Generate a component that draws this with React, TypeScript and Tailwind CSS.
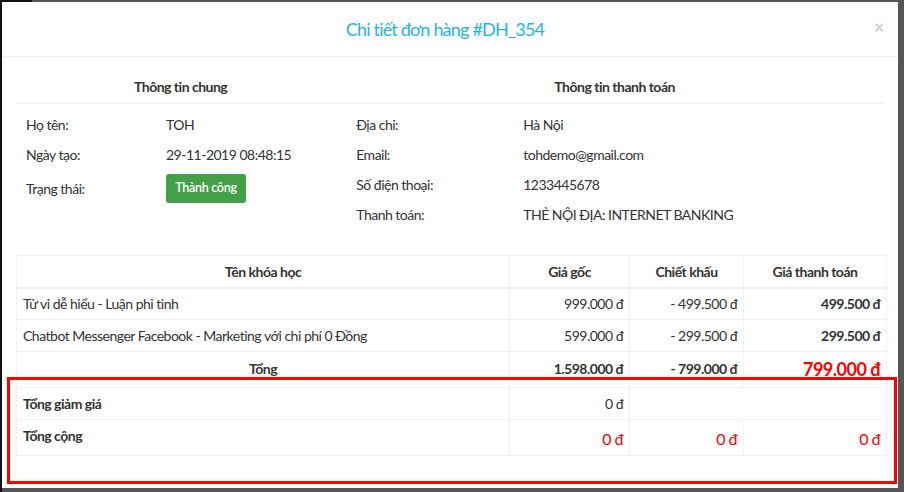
import React from "react";

const cell = "border border-[#f2f2f2] px-[6px]";

const rows = [
  { name: "Tử vi dễ hiểu - Luận phi tinh", price: "999.000 đ", off: "- 499.500 đ", pay: "499.500 đ" },
  {
    name: "Chatbot Messenger Facebook - Marketing với chi phí 0 Đồng",
    price: "599.000 đ",
    off: "- 299.500 đ",
    pay: "299.500 đ",
  },
];

function InfoRow({ label, value, labelWidth }: { label: string; value: React.ReactNode; labelWidth: string }) {
  return (
    <div className="flex h-[30px] items-center">
      <div className={labelWidth}>{label}</div>
      <div>{value}</div>
    </div>
  );
}

export default function App() {
  return (
    <div className="relative h-[492px] w-[904px] overflow-hidden border-l-2 border-[#111] bg-[#555] pt-[2px] font-['Lato',sans-serif] text-[14px] tracking-[-0.5px] text-[#333]">
      <div className="absolute left-0 top-0 h-[2px] w-[30px] bg-[#111]" />

      <div className="h-[486px] w-[896px] bg-white">
        {/* header */}
        <div className="relative flex h-[55px] items-center justify-center border-b border-[#eee]">
          <h4 className="pr-[10px] text-[18px] tracking-[-0.8px] text-[#1fb3e8]">Chi tiết đơn hàng #DH_354</h4>
          <span className="absolute right-[14px] top-[12px] text-[18px] font-bold text-[#cfcfcf]">×</span>
        </div>

        <div className="px-[14px] pt-[14px]">
          {/* info */}
          <div className="flex">
            <div className="w-[330px]">
              <div className="flex h-[33px] items-center justify-center border-b-2 border-[#f4f4f4] font-bold">
                Thông tin chung
              </div>
              <div className="pl-[10px] pt-[5px]">
                <InfoRow label="Họ tên:" value="TOH" labelWidth="w-[140px]" />
                <InfoRow label="Ngày tạo:" value="29-11-2019 08:48:15" labelWidth="w-[140px]" />
                <div className="flex h-[38px] items-center">
                  <div className="w-[140px]">Trạng thái:</div>
                  <span className="flex h-[29px] w-[80px] items-center justify-center rounded-[3px] bg-[#43a047] text-[12.5px] font-semibold tracking-[-0.3px] text-white">
                    Thành công
                  </span>
                </div>
              </div>
            </div>
            <div className="w-[540px]">
              <div className="flex h-[33px] items-center justify-center border-b-2 border-[#f4f4f4] font-bold">
                Thông tin thanh toán
              </div>
              <div className="pl-[11px] pt-[5px]">
                <InfoRow label="Địa chỉ:" value="Hà Nội" labelWidth="w-[167px]" />
                <InfoRow label="Email:" value="tohdemo@gmail.com" labelWidth="w-[167px]" />
                <InfoRow label="Số điện thoại:" value="1233445678" labelWidth="w-[167px]" />
                <InfoRow label="Thanh toán:" value="THẺ NỘI ĐỊA: INTERNET BANKING" labelWidth="w-[167px]" />
              </div>
            </div>
          </div>

          {/* table */}
          <table className="mt-[26px] w-[870px] table-fixed border-collapse">
            <colgroup>
              <col className="w-[493px]" />
              <col className="w-[120px]" />
              <col className="w-[114px]" />
              <col className="w-[143px]" />
            </colgroup>
            <thead>
              <tr className="h-[32px] font-bold">
                <th className={`${cell} border-b-2 text-center`}>Tên khóa học</th>
                <th className={`${cell} border-b-2 text-center`}>Giá gốc</th>
                <th className={`${cell} border-b-2 text-center`}>Chiết khấu</th>
                <th className={`${cell} border-b-2 text-center`}>Giá thanh toán</th>
              </tr>
            </thead>
            <tbody>
              {rows.map((r) => (
                <tr key={r.name} className="h-[32px]">
                  <td className={cell}>{r.name}</td>
                  <td className={`${cell} text-right`}>{r.price}</td>
                  <td className={`${cell} text-right`}>{r.off}</td>
                  <td className={`${cell} text-right font-bold`}>{r.pay}</td>
                </tr>
              ))}
              <tr className="h-[36px] font-bold">
                <td className={`${cell} pb-[3px] text-center`}>Tổng</td>
                <td className={`${cell} pb-[3px] text-right`}>1.598.000 đ</td>
                <td className={`${cell} pb-[3px] text-right`}>- 799.000 đ</td>
                <td className={`${cell} text-right text-[18px] text-[#f00]`}>799.000 đ</td>
              </tr>
              <tr className="h-[32px]">
                <td className={`${cell} font-bold`}>Tổng giảm giá</td>
                <td className={`${cell} text-right`}>0 đ</td>
                <td colSpan={2} className="border-r border-[#f2f2f2]" />
              </tr>
              <tr className="h-[36px]">
                <td className={`${cell} pb-[4px] font-bold`}>Tổng cộng</td>
                <td className={`${cell} pt-[2px] text-right text-[16px] text-[#f00]`}>0 đ</td>
                <td className={`${cell} pt-[2px] text-right text-[16px] text-[#f00]`}>0 đ</td>
                <td className={`${cell} pt-[2px] text-right text-[16px] text-[#f00]`}>0 đ</td>
              </tr>
            </tbody>
          </table>
        </div>
      </div>

      {/* annotation box */}
      <div className="absolute left-[5px] top-[377px] h-[107px] w-[890px] border-[3px] border-[#f00]" />
    </div>
  );
}
